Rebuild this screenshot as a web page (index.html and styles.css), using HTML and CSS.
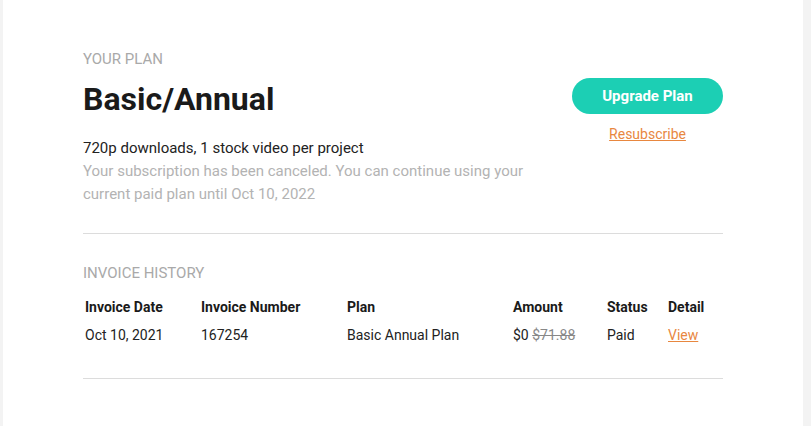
FILE: index.html
```html
<!DOCTYPE html>
<html>
<head>
<meta charset="utf-8">
<link rel="stylesheet" href="styles.css">
</head>
<body>
<div class="card">
  <section class="plan">
    <div class="plan-info">
      <div class="label">YOUR PLAN</div>
      <h1 class="title">Basic/Annual</h1>
      <p class="feature">720p downloads, 1 stock video per project</p>
      <p class="note">Your subscription has been canceled. You can continue using your current paid plan until Oct 10, 2022</p>
    </div>
    <div class="plan-actions">
      <button class="btn">Upgrade Plan</button>
      <a class="link" href="#">Resubscribe</a>
    </div>
  </section>
  <hr class="divider">
  <section class="invoices">
    <div class="label">INVOICE HISTORY</div>
    <table class="table">
      <thead>
        <tr>
          <th class="c1">Invoice Date</th>
          <th class="c2">Invoice Number</th>
          <th class="c3">Plan</th>
          <th class="c4">Amount</th>
          <th class="c5">Status</th>
          <th class="c6">Detail</th>
        </tr>
      </thead>
      <tbody>
        <tr>
          <td>Oct 10, 2021</td>
          <td>167254</td>
          <td>Basic Annual Plan</td>
          <td>$0 <s class="old">$71.88</s></td>
          <td>Paid</td>
          <td><a class="link" href="#">View</a></td>
        </tr>
      </tbody>
    </table>
  </section>
  <hr class="divider">
</div>
</body>
</html>
```
FILE: styles.css
```css
html, body {
  margin: 0;
  padding: 0;
  height: 100%;
}
body {
  background: #f3f3f3;
  font-family: Roboto, "Liberation Sans", sans-serif;
  color: #1a1a1a;
}
.card {
  background: #fff;
  margin: 0 8px 0 3px;
  height: 100%;
  padding: 50px 80px 0 80px;
  box-sizing: border-box;
}
.plan {
  display: flex;
  justify-content: space-between;
}
.label {
  font-size: 15px;
  color: #a9a9a9;
  line-height: 18px;
}
.title {
  font-size: 32px;
  font-weight: 700;
  margin: 11px 0 0 0;
  line-height: 40px;
  color: #1a1a1a;
}
.feature {
  margin: 18px 0 0 0;
  font-size: 15px;
  line-height: 23px;
  color: #222;
}
.note {
  margin: 0;
  font-size: 15px;
  line-height: 23px;
  color: #b3b3b3;
  width: 460px;
}
.plan-actions {
  display: flex;
  flex-direction: column;
  align-items: center;
  padding-top: 28px;
}
.btn {
  width: 151px;
  height: 36px;
  border: none;
  border-radius: 18px;
  background: #1ccfb4;
  color: #fff;
  font-family: Roboto, "Liberation Sans", sans-serif;
  font-size: 15px;
  font-weight: 700;
  cursor: pointer;
}
.link {
  color: #e8873f;
  text-decoration: underline;
  font-size: 14px;
}
.plan-actions .link {
  margin-top: 12px;
}
.divider {
  border: none;
  border-top: 1px solid #dcdcdc;
  margin: 0;
}
.plan + .divider {
  margin-top: 27px;
}
.invoices {
  padding-top: 30px;
}
.table {
  border-collapse: collapse;
  margin-top: 15px;
  margin-bottom: 33px;
  font-size: 14px;
}
.table th, .table td {
  text-align: left;
  padding: 0 0 0 2px;
}
.table th {
  font-weight: 700;
  height: 20px;
  padding-bottom: 8px;
  color: #1a1a1a;
}
.table td {
  height: 20px;
  color: #222;
}
.c1 { width: 114px; }
.c2 { width: 144px; }
.c3 { width: 164px; }
.c4 { width: 92px; }
.c5 { width: 59px; }
.c6 { width: 50px; }
.old {
  color: #888;
}
```
